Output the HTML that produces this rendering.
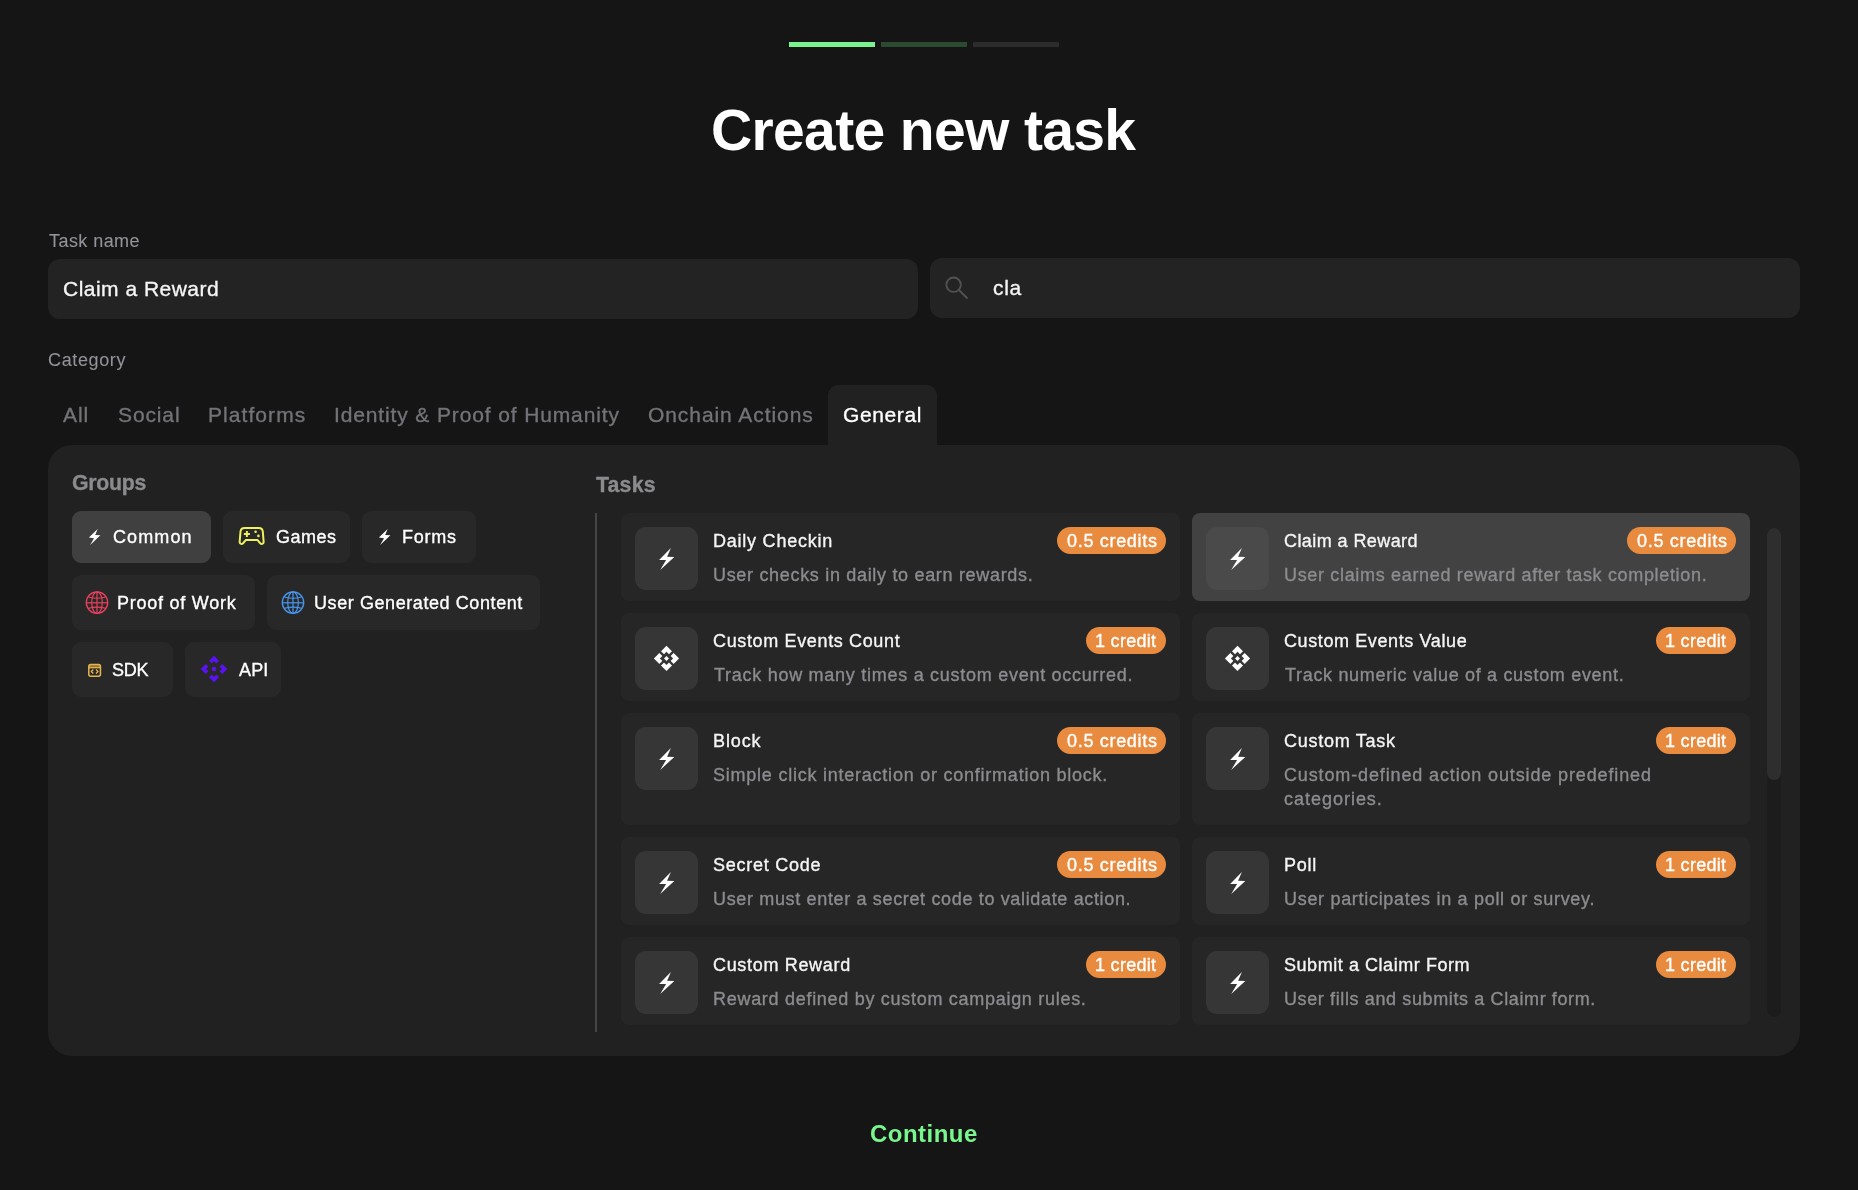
<!DOCTYPE html><html><head><meta charset="utf-8"><style>
html,body{margin:0;padding:0;background:#151515;width:1858px;height:1190px;overflow:hidden;}
body{position:relative;font-family:"Liberation Sans", sans-serif;-webkit-font-smoothing:antialiased;}
.a{position:absolute;display:block;}
.t{position:absolute;white-space:nowrap;will-change:transform;}
.bx{position:absolute;}
</style></head><body>
<div class="bx" style="left:789px;top:42px;width:86px;height:5px;background:#7af28f"></div>
<div class="bx" style="left:881px;top:42px;width:86px;height:5px;background:#2b4a31"></div>
<div class="bx" style="left:973px;top:42px;width:86px;height:5px;background:#2c2c2c"></div>
<div class="t" style="left:711.0px;top:101.55px;font-size:57px;line-height:57px;color:#ffffff;font-weight:700;letter-spacing:-0.643px;">Create new task</div>
<div class="t" style="left:49.0px;top:231.76px;font-size:18px;line-height:18px;color:#929298;font-weight:400;letter-spacing:0.438px;-webkit-text-stroke:0.1px #929298;">Task name</div>
<div class="t" style="left:47.9px;top:351.36px;font-size:18px;line-height:18px;color:#929298;font-weight:400;letter-spacing:0.629px;-webkit-text-stroke:0.1px #929298;">Category</div>
<div class="bx" style="left:48px;top:259px;width:870px;height:60px;background:#232323;border-radius:12px"></div>
<div class="t" style="left:62.7px;top:278.22px;font-size:21px;line-height:21px;color:#f5f5f5;font-weight:400;letter-spacing:0.485px;-webkit-text-stroke:0.35px #f5f5f5;">Claim a Reward</div>
<div class="bx" style="left:930px;top:258px;width:870px;height:60px;background:#232323;border-radius:12px"></div>
<svg class="a" style="left:940px;top:272px" width="32" height="32" viewBox="0 0 32 32"><circle cx="13.6" cy="12.7" r="7.2" fill="none" stroke="#525252" stroke-width="1.85"/><line x1="18.8" y1="17.9" x2="26.9" y2="26" stroke="#525252" stroke-width="1.9" stroke-linecap="round"/></svg>
<div class="t" style="left:992.6px;top:277.32px;font-size:21px;line-height:21px;color:#f5f5f5;font-weight:400;letter-spacing:0.7px;-webkit-text-stroke:0.35px #f5f5f5;">cla</div>
<div class="bx" style="left:828px;top:385px;width:109px;height:70px;background:#212121;border-radius:10px 10px 0 0"></div>
<div class="t" style="left:63.4px;top:404.42px;font-size:21px;line-height:21px;color:#737378;font-weight:400;letter-spacing:0.9px;-webkit-text-stroke:0.35px #737378;">All</div>
<div class="t" style="left:118.2px;top:404.42px;font-size:21px;line-height:21px;color:#737378;font-weight:400;letter-spacing:0.88px;-webkit-text-stroke:0.35px #737378;">Social</div>
<div class="t" style="left:207.6px;top:404.42px;font-size:21px;line-height:21px;color:#737378;font-weight:400;letter-spacing:1.063px;-webkit-text-stroke:0.35px #737378;">Platforms</div>
<div class="t" style="left:333.5px;top:404.42px;font-size:21px;line-height:21px;color:#737378;font-weight:400;letter-spacing:0.87px;-webkit-text-stroke:0.35px #737378;">Identity &amp; Proof of Humanity</div>
<div class="t" style="left:648.0px;top:404.42px;font-size:21px;line-height:21px;color:#737378;font-weight:400;letter-spacing:0.929px;-webkit-text-stroke:0.35px #737378;">Onchain Actions</div>
<div class="t" style="left:842.6px;top:404.22px;font-size:21px;line-height:21px;color:#ffffff;font-weight:400;letter-spacing:0.62px;-webkit-text-stroke:0.35px #ffffff;">General</div>
<div class="bx" style="left:48px;top:445px;width:1752px;height:611px;background:#212121;border-radius:24px"></div>
<div class="t" style="left:71.8px;top:472.87px;font-size:21.3px;line-height:21.3px;color:#8b8b8f;font-weight:700;letter-spacing:-0.28px;-webkit-text-stroke:0.3px #8b8b8f;">Groups</div>
<div class="t" style="left:596.0px;top:474.97px;font-size:21.3px;line-height:21.3px;color:#8b8b8f;font-weight:700;letter-spacing:0.175px;-webkit-text-stroke:0.3px #8b8b8f;">Tasks</div>
<div class="bx" style="left:72px;top:511px;width:139px;height:52px;background:#404040;border-radius:9px"></div>
<div class="bx" style="left:223px;top:511px;width:127px;height:52px;background:#282828;border-radius:9px"></div>
<div class="bx" style="left:362px;top:511px;width:114px;height:52px;background:#282828;border-radius:9px"></div>
<div class="bx" style="left:72px;top:575px;width:183px;height:55px;background:#282828;border-radius:9px"></div>
<div class="bx" style="left:267px;top:575px;width:273px;height:55px;background:#282828;border-radius:9px"></div>
<div class="bx" style="left:72px;top:642px;width:101px;height:55px;background:#282828;border-radius:9px"></div>
<div class="bx" style="left:185px;top:642px;width:96px;height:55px;background:#282828;border-radius:9px"></div>
<svg class="a" style="left:88px;top:529px" width="14" height="17" viewBox="0 0 14 17"><path d="M9.66,0.1 L7.2,5.9 L12.4,6.3 L2.2,15.9 L6.0,9.2 L0.9,8.5 Z" fill="#fff"/></svg>
<svg class="a" style="left:378px;top:529px" width="14" height="17" viewBox="0 0 14 17"><path d="M9.66,0.1 L7.2,5.9 L12.4,6.3 L2.2,15.9 L6.0,9.2 L0.9,8.5 Z" fill="#fff"/></svg>
<svg class="a" style="left:234px;top:520px" width="36" height="32" viewBox="0 0 36 32"><path d="M10.5,8 H24.8 Q28.4,8 28.8,11.5 L29.6,21.4 Q29.8,23.9 27.8,23.9 Q26.9,23.9 26,23 L23.4,19.9 H11.9 L9.3,23 Q8.4,23.9 7.5,23.9 Q5.5,23.9 5.7,21.4 L6.5,11.5 Q6.9,8 10.5,8 Z" fill="none" stroke="#eef05c" stroke-width="2" stroke-linejoin="round"/><path d="M12.9,11 V17 M9.9,14 H15.9" stroke="#eef05c" stroke-width="1.9"/><circle cx="21.6" cy="11.8" r="1.3" fill="#eef05c"/><circle cx="24.4" cy="15.9" r="1.3" fill="#eef05c"/></svg>
<svg class="a" style="left:84px;top:590px" width="26" height="26" viewBox="0 0 26 26"><circle cx="13" cy="12.6" r="10.7" fill="none" stroke="#e8405e" stroke-width="1.35"/><ellipse cx="13" cy="12.6" rx="5.3" ry="10.7" fill="none" stroke="#e8405e" stroke-width="1.2"/><line x1="13" y1="2" x2="13" y2="23.3" stroke="#e8405e" stroke-width="1.2"/><line x1="2.3" y1="12.8" x2="23.7" y2="12.8" stroke="#e8405e" stroke-width="1.2"/><path d="M4.6,6.9 Q13,9.6 21.4,6.9" fill="none" stroke="#e8405e" stroke-width="1.1"/><path d="M4.6,18.3 Q13,15.9 21.4,18.3" fill="none" stroke="#e8405e" stroke-width="1.1"/></svg>
<svg class="a" style="left:280px;top:590px" width="26" height="26" viewBox="0 0 26 26"><circle cx="13" cy="12.6" r="10.7" fill="none" stroke="#4796ee" stroke-width="1.35"/><ellipse cx="13" cy="12.6" rx="5.3" ry="10.7" fill="none" stroke="#4796ee" stroke-width="1.2"/><line x1="13" y1="2" x2="13" y2="23.3" stroke="#4796ee" stroke-width="1.2"/><line x1="2.3" y1="12.8" x2="23.7" y2="12.8" stroke="#4796ee" stroke-width="1.2"/><path d="M4.6,6.9 Q13,9.6 21.4,6.9" fill="none" stroke="#4796ee" stroke-width="1.1"/><path d="M4.6,18.3 Q13,15.9 21.4,18.3" fill="none" stroke="#4796ee" stroke-width="1.1"/></svg>
<svg class="a" style="left:86px;top:662px" width="17" height="17" viewBox="0 0 17 17"><rect x="2.8" y="2.55" width="11.65" height="11.7" rx="2" fill="none" stroke="#e8b54a" stroke-width="1.5"/><rect x="2.8" y="2.55" width="11.65" height="3.2" rx="1" fill="#e8b54a" fill-opacity="0.55"/><line x1="2.8" y1="5.7" x2="14.45" y2="5.7" stroke="#e8b54a" stroke-width="1.3"/><path d="M7.3,7.5 L5.3,9.5 L7.3,11.5 M10,7.5 L12,9.5 L10,11.5" fill="none" stroke="#e8b54a" stroke-width="1.3"/></svg>
<svg class="a" style="left:199px;top:654px" width="30" height="30" viewBox="0 0 30 30"><g fill="none" stroke="#5a12f5" stroke-width="3.8" stroke-linejoin="miter"><path d="M11.3,8.099999999999998 L15,4.399999999999999 L18.7,8.099999999999998"/><path d="M11.3,21.900000000000002 L15,25.6 L18.7,21.900000000000002"/><path d="M8.099999999999998,11.3 L4.399999999999999,15 L8.099999999999998,18.7"/><path d="M21.900000000000002,11.3 L25.6,15 L21.900000000000002,18.7"/></g><circle cx="15" cy="15" r="2.3" fill="#5a12f5"/></svg>
<div class="t" style="left:113.3px;top:528.16px;font-size:18px;line-height:18px;color:#ffffff;font-weight:400;letter-spacing:1.1px;-webkit-text-stroke:0.35px #ffffff;">Common</div>
<div class="t" style="left:275.90000000000003px;top:528.16px;font-size:18px;line-height:18px;color:#ffffff;font-weight:400;letter-spacing:0.5px;-webkit-text-stroke:0.35px #ffffff;">Games</div>
<div class="t" style="left:401.6px;top:528.16px;font-size:18px;line-height:18px;color:#ffffff;font-weight:400;letter-spacing:0.75px;-webkit-text-stroke:0.35px #ffffff;">Forms</div>
<div class="t" style="left:116.6px;top:593.96px;font-size:18px;line-height:18px;color:#ffffff;font-weight:400;letter-spacing:0.75px;-webkit-text-stroke:0.35px #ffffff;">Proof of Work</div>
<div class="t" style="left:313.90000000000003px;top:593.96px;font-size:18px;line-height:18px;color:#ffffff;font-weight:400;letter-spacing:0.581px;-webkit-text-stroke:0.35px #ffffff;">User Generated Content</div>
<div class="t" style="left:112.1px;top:660.76px;font-size:18px;line-height:18px;color:#ffffff;font-weight:400;letter-spacing:-0.25px;-webkit-text-stroke:0.35px #ffffff;">SDK</div>
<div class="t" style="left:239.0px;top:660.76px;font-size:18px;line-height:18px;color:#ffffff;font-weight:400;letter-spacing:0.15px;-webkit-text-stroke:0.35px #ffffff;">API</div>
<div class="bx" style="left:595px;top:513px;width:2px;height:519px;background:#464646"></div>
<div class="bx" style="left:1767px;top:528px;width:14px;height:489px;background:#1c1c1c;border-radius:7px"></div>
<div class="bx" style="left:1767px;top:528px;width:14px;height:252px;background:#2e2e2e;border-radius:7px"></div>
<div class="bx" style="left:621px;top:513px;width:559px;height:88px;background:#262626;border-radius:8px"></div>
<div class="bx" style="left:635px;top:527px;width:63px;height:63px;background:#363636;border-radius:11px"></div>
<svg class="a" style="left:635px;top:527px" width="63" height="63" viewBox="0 0 63 63"><path d="M35.9,21.1 L32.1,29.8 L39.3,29.9 L25.2,42.9 L31.1,33.1 L24.1,33.0 Z" fill="#fff"/></svg>
<div class="t" style="left:713.1px;top:531.76px;font-size:18px;line-height:18px;color:#f5f5f5;font-weight:400;letter-spacing:0.767px;-webkit-text-stroke:0.35px #f5f5f5;">Daily Checkin</div>
<div class="t" style="left:713.0px;top:565.76px;font-size:18px;line-height:18px;color:#8c8c90;font-weight:400;letter-spacing:0.683px;-webkit-text-stroke:0.35px #8c8c90;">User checks in daily to earn rewards.</div>
<div class="bx" style="left:1057px;top:527px;width:109px;height:27px;background:#e88b3f;border-radius:14px"></div>
<div class="t" style="left:1066.7px;top:531.76px;font-size:18px;line-height:18px;color:#ffffff;font-weight:400;letter-spacing:0.69px;-webkit-text-stroke:0.35px #ffffff;">0.5 credits</div>
<div class="bx" style="left:1192px;top:513px;width:558px;height:88px;background:#424242;border-radius:8px"></div>
<div class="bx" style="left:1206px;top:527px;width:63px;height:63px;background:#4a4a4a;border-radius:11px"></div>
<svg class="a" style="left:1206px;top:527px" width="63" height="63" viewBox="0 0 63 63"><path d="M35.9,21.1 L32.1,29.8 L39.3,29.9 L25.2,42.9 L31.1,33.1 L24.1,33.0 Z" fill="#fff"/></svg>
<div class="t" style="left:1284.4px;top:531.76px;font-size:18px;line-height:18px;color:#f5f5f5;font-weight:400;letter-spacing:0.423px;-webkit-text-stroke:0.35px #f5f5f5;">Claim a Reward</div>
<div class="t" style="left:1284.4px;top:565.76px;font-size:18px;line-height:18px;color:#8c8c90;font-weight:400;letter-spacing:0.67px;-webkit-text-stroke:0.35px #8c8c90;">User claims earned reward after task completion.</div>
<div class="bx" style="left:1627px;top:527px;width:109px;height:27px;background:#e88b3f;border-radius:14px"></div>
<div class="t" style="left:1636.7px;top:531.76px;font-size:18px;line-height:18px;color:#ffffff;font-weight:400;letter-spacing:0.69px;-webkit-text-stroke:0.35px #ffffff;">0.5 credits</div>
<div class="bx" style="left:621px;top:613px;width:559px;height:88px;background:#262626;border-radius:8px"></div>
<div class="bx" style="left:635px;top:627px;width:63px;height:63px;background:#363636;border-radius:11px"></div>
<svg class="a" style="left:635px;top:627px" width="63" height="63" viewBox="0 0 63 63"><path d="M31.5,18.799999999999997 L44.1,31.4 L31.5,44.0 L18.9,31.4 Z" fill="#fff"/><line x1="18.9" y1="18.799999999999997" x2="44.1" y2="44.0" stroke="#363636" stroke-width="2.4"/><line x1="18.9" y1="44.0" x2="44.1" y2="18.799999999999997" stroke="#363636" stroke-width="2.4"/><path d="M31.5,24.799999999999997 L38.1,31.4 L31.5,38.0 L24.9,31.4 Z" fill="#363636"/><path d="M31.5,28.9 L34.0,31.4 L31.5,33.9 L29.0,31.4 Z" fill="#fff"/></svg>
<div class="t" style="left:713.0px;top:631.76px;font-size:18px;line-height:18px;color:#f5f5f5;font-weight:400;letter-spacing:0.644px;-webkit-text-stroke:0.35px #f5f5f5;">Custom Events Count</div>
<div class="t" style="left:714.0px;top:665.76px;font-size:18px;line-height:18px;color:#8c8c90;font-weight:400;letter-spacing:0.727px;-webkit-text-stroke:0.35px #8c8c90;">Track how many times a custom event occurred.</div>
<div class="bx" style="left:1085.5px;top:627px;width:80.5px;height:27px;background:#e88b3f;border-radius:14px"></div>
<div class="t" style="left:1095.0px;top:631.76px;font-size:18px;line-height:18px;color:#ffffff;font-weight:400;letter-spacing:0.29px;-webkit-text-stroke:0.35px #ffffff;">1 credit</div>
<div class="bx" style="left:1192px;top:613px;width:558px;height:88px;background:#262626;border-radius:8px"></div>
<div class="bx" style="left:1206px;top:627px;width:63px;height:63px;background:#363636;border-radius:11px"></div>
<svg class="a" style="left:1206px;top:627px" width="63" height="63" viewBox="0 0 63 63"><path d="M31.5,18.799999999999997 L44.1,31.4 L31.5,44.0 L18.9,31.4 Z" fill="#fff"/><line x1="18.9" y1="18.799999999999997" x2="44.1" y2="44.0" stroke="#363636" stroke-width="2.4"/><line x1="18.9" y1="44.0" x2="44.1" y2="18.799999999999997" stroke="#363636" stroke-width="2.4"/><path d="M31.5,24.799999999999997 L38.1,31.4 L31.5,38.0 L24.9,31.4 Z" fill="#363636"/><path d="M31.5,28.9 L34.0,31.4 L31.5,33.9 L29.0,31.4 Z" fill="#fff"/></svg>
<div class="t" style="left:1284.1px;top:631.76px;font-size:18px;line-height:18px;color:#f5f5f5;font-weight:400;letter-spacing:0.606px;-webkit-text-stroke:0.35px #f5f5f5;">Custom Events Value</div>
<div class="t" style="left:1285.1px;top:665.76px;font-size:18px;line-height:18px;color:#8c8c90;font-weight:400;letter-spacing:0.681px;-webkit-text-stroke:0.35px #8c8c90;">Track numeric value of a custom event.</div>
<div class="bx" style="left:1655.5px;top:627px;width:80.5px;height:27px;background:#e88b3f;border-radius:14px"></div>
<div class="t" style="left:1665.0px;top:631.76px;font-size:18px;line-height:18px;color:#ffffff;font-weight:400;letter-spacing:0.29px;-webkit-text-stroke:0.35px #ffffff;">1 credit</div>
<div class="bx" style="left:621px;top:713px;width:559px;height:111.5px;background:#262626;border-radius:8px"></div>
<div class="bx" style="left:635px;top:727px;width:63px;height:63px;background:#363636;border-radius:11px"></div>
<svg class="a" style="left:635px;top:727px" width="63" height="63" viewBox="0 0 63 63"><path d="M35.9,21.1 L32.1,29.8 L39.3,29.9 L25.2,42.9 L31.1,33.1 L24.1,33.0 Z" fill="#fff"/></svg>
<div class="t" style="left:713.4px;top:731.76px;font-size:18px;line-height:18px;color:#f5f5f5;font-weight:400;letter-spacing:0.875px;-webkit-text-stroke:0.35px #f5f5f5;">Block</div>
<div class="t" style="left:713.4px;top:765.76px;font-size:18px;line-height:18px;color:#8c8c90;font-weight:400;letter-spacing:0.765px;-webkit-text-stroke:0.35px #8c8c90;">Simple click interaction or confirmation block.</div>
<div class="bx" style="left:1057px;top:727px;width:109px;height:27px;background:#e88b3f;border-radius:14px"></div>
<div class="t" style="left:1066.7px;top:731.76px;font-size:18px;line-height:18px;color:#ffffff;font-weight:400;letter-spacing:0.69px;-webkit-text-stroke:0.35px #ffffff;">0.5 credits</div>
<div class="bx" style="left:1192px;top:713px;width:558px;height:111.5px;background:#262626;border-radius:8px"></div>
<div class="bx" style="left:1206px;top:727px;width:63px;height:63px;background:#363636;border-radius:11px"></div>
<svg class="a" style="left:1206px;top:727px" width="63" height="63" viewBox="0 0 63 63"><path d="M35.9,21.1 L32.1,29.8 L39.3,29.9 L25.2,42.9 L31.1,33.1 L24.1,33.0 Z" fill="#fff"/></svg>
<div class="t" style="left:1284.1px;top:731.76px;font-size:18px;line-height:18px;color:#f5f5f5;font-weight:400;letter-spacing:0.73px;-webkit-text-stroke:0.35px #f5f5f5;">Custom Task</div>
<div class="t" style="left:1284.1px;top:765.76px;font-size:18px;line-height:18px;color:#8c8c90;font-weight:400;letter-spacing:0.864px;-webkit-text-stroke:0.35px #8c8c90;">Custom-defined action outside predefined</div>
<div class="t" style="left:1284.1px;top:789.76px;font-size:18px;line-height:18px;color:#8c8c90;font-weight:400;letter-spacing:0.98px;-webkit-text-stroke:0.35px #8c8c90;">categories.</div>
<div class="bx" style="left:1655.5px;top:727px;width:80.5px;height:27px;background:#e88b3f;border-radius:14px"></div>
<div class="t" style="left:1665.0px;top:731.76px;font-size:18px;line-height:18px;color:#ffffff;font-weight:400;letter-spacing:0.29px;-webkit-text-stroke:0.35px #ffffff;">1 credit</div>
<div class="bx" style="left:621px;top:837px;width:559px;height:88px;background:#262626;border-radius:8px"></div>
<div class="bx" style="left:635px;top:851px;width:63px;height:63px;background:#363636;border-radius:11px"></div>
<svg class="a" style="left:635px;top:851px" width="63" height="63" viewBox="0 0 63 63"><path d="M35.9,21.1 L32.1,29.8 L39.3,29.9 L25.2,42.9 L31.1,33.1 L24.1,33.0 Z" fill="#fff"/></svg>
<div class="t" style="left:713.4px;top:855.76px;font-size:18px;line-height:18px;color:#f5f5f5;font-weight:400;letter-spacing:0.74px;-webkit-text-stroke:0.35px #f5f5f5;">Secret Code</div>
<div class="t" style="left:713.4px;top:889.76px;font-size:18px;line-height:18px;color:#8c8c90;font-weight:400;letter-spacing:0.654px;-webkit-text-stroke:0.35px #8c8c90;">User must enter a secret code to validate action.</div>
<div class="bx" style="left:1057px;top:851px;width:109px;height:27px;background:#e88b3f;border-radius:14px"></div>
<div class="t" style="left:1066.7px;top:855.76px;font-size:18px;line-height:18px;color:#ffffff;font-weight:400;letter-spacing:0.69px;-webkit-text-stroke:0.35px #ffffff;">0.5 credits</div>
<div class="bx" style="left:1192px;top:837px;width:558px;height:88px;background:#262626;border-radius:8px"></div>
<div class="bx" style="left:1206px;top:851px;width:63px;height:63px;background:#363636;border-radius:11px"></div>
<svg class="a" style="left:1206px;top:851px" width="63" height="63" viewBox="0 0 63 63"><path d="M35.9,21.1 L32.1,29.8 L39.3,29.9 L25.2,42.9 L31.1,33.1 L24.1,33.0 Z" fill="#fff"/></svg>
<div class="t" style="left:1284.1px;top:855.76px;font-size:18px;line-height:18px;color:#f5f5f5;font-weight:400;letter-spacing:0.767px;-webkit-text-stroke:0.35px #f5f5f5;">Poll</div>
<div class="t" style="left:1284.1px;top:889.76px;font-size:18px;line-height:18px;color:#8c8c90;font-weight:400;letter-spacing:0.692px;-webkit-text-stroke:0.35px #8c8c90;">User participates in a poll or survey.</div>
<div class="bx" style="left:1655.5px;top:851px;width:80.5px;height:27px;background:#e88b3f;border-radius:14px"></div>
<div class="t" style="left:1665.0px;top:855.76px;font-size:18px;line-height:18px;color:#ffffff;font-weight:400;letter-spacing:0.29px;-webkit-text-stroke:0.35px #ffffff;">1 credit</div>
<div class="bx" style="left:621px;top:937px;width:559px;height:88px;background:#262626;border-radius:8px"></div>
<div class="bx" style="left:635px;top:951px;width:63px;height:63px;background:#363636;border-radius:11px"></div>
<svg class="a" style="left:635px;top:951px" width="63" height="63" viewBox="0 0 63 63"><path d="M35.9,21.1 L32.1,29.8 L39.3,29.9 L25.2,42.9 L31.1,33.1 L24.1,33.0 Z" fill="#fff"/></svg>
<div class="t" style="left:713.4px;top:955.76px;font-size:18px;line-height:18px;color:#f5f5f5;font-weight:400;letter-spacing:0.675px;-webkit-text-stroke:0.35px #f5f5f5;">Custom Reward</div>
<div class="t" style="left:713.4px;top:989.76px;font-size:18px;line-height:18px;color:#8c8c90;font-weight:400;letter-spacing:0.71px;-webkit-text-stroke:0.35px #8c8c90;">Reward defined by custom campaign rules.</div>
<div class="bx" style="left:1085.5px;top:951px;width:80.5px;height:27px;background:#e88b3f;border-radius:14px"></div>
<div class="t" style="left:1095.0px;top:955.76px;font-size:18px;line-height:18px;color:#ffffff;font-weight:400;letter-spacing:0.29px;-webkit-text-stroke:0.35px #ffffff;">1 credit</div>
<div class="bx" style="left:1192px;top:937px;width:558px;height:88px;background:#262626;border-radius:8px"></div>
<div class="bx" style="left:1206px;top:951px;width:63px;height:63px;background:#363636;border-radius:11px"></div>
<svg class="a" style="left:1206px;top:951px" width="63" height="63" viewBox="0 0 63 63"><path d="M35.9,21.1 L32.1,29.8 L39.3,29.9 L25.2,42.9 L31.1,33.1 L24.1,33.0 Z" fill="#fff"/></svg>
<div class="t" style="left:1284.1px;top:955.76px;font-size:18px;line-height:18px;color:#f5f5f5;font-weight:400;letter-spacing:0.553px;-webkit-text-stroke:0.35px #f5f5f5;">Submit a Claimr Form</div>
<div class="t" style="left:1284.1px;top:989.76px;font-size:18px;line-height:18px;color:#8c8c90;font-weight:400;letter-spacing:0.619px;-webkit-text-stroke:0.35px #8c8c90;">User fills and submits a Claimr form.</div>
<div class="bx" style="left:1655.5px;top:951px;width:80.5px;height:27px;background:#e88b3f;border-radius:14px"></div>
<div class="t" style="left:1665.0px;top:955.76px;font-size:18px;line-height:18px;color:#ffffff;font-weight:400;letter-spacing:0.29px;-webkit-text-stroke:0.35px #ffffff;">1 credit</div>
<div class="t" style="left:870.3px;top:1121.98px;font-size:24px;line-height:24px;color:#7af68e;font-weight:700;letter-spacing:0.471px;">Continue</div>
</body></html>
